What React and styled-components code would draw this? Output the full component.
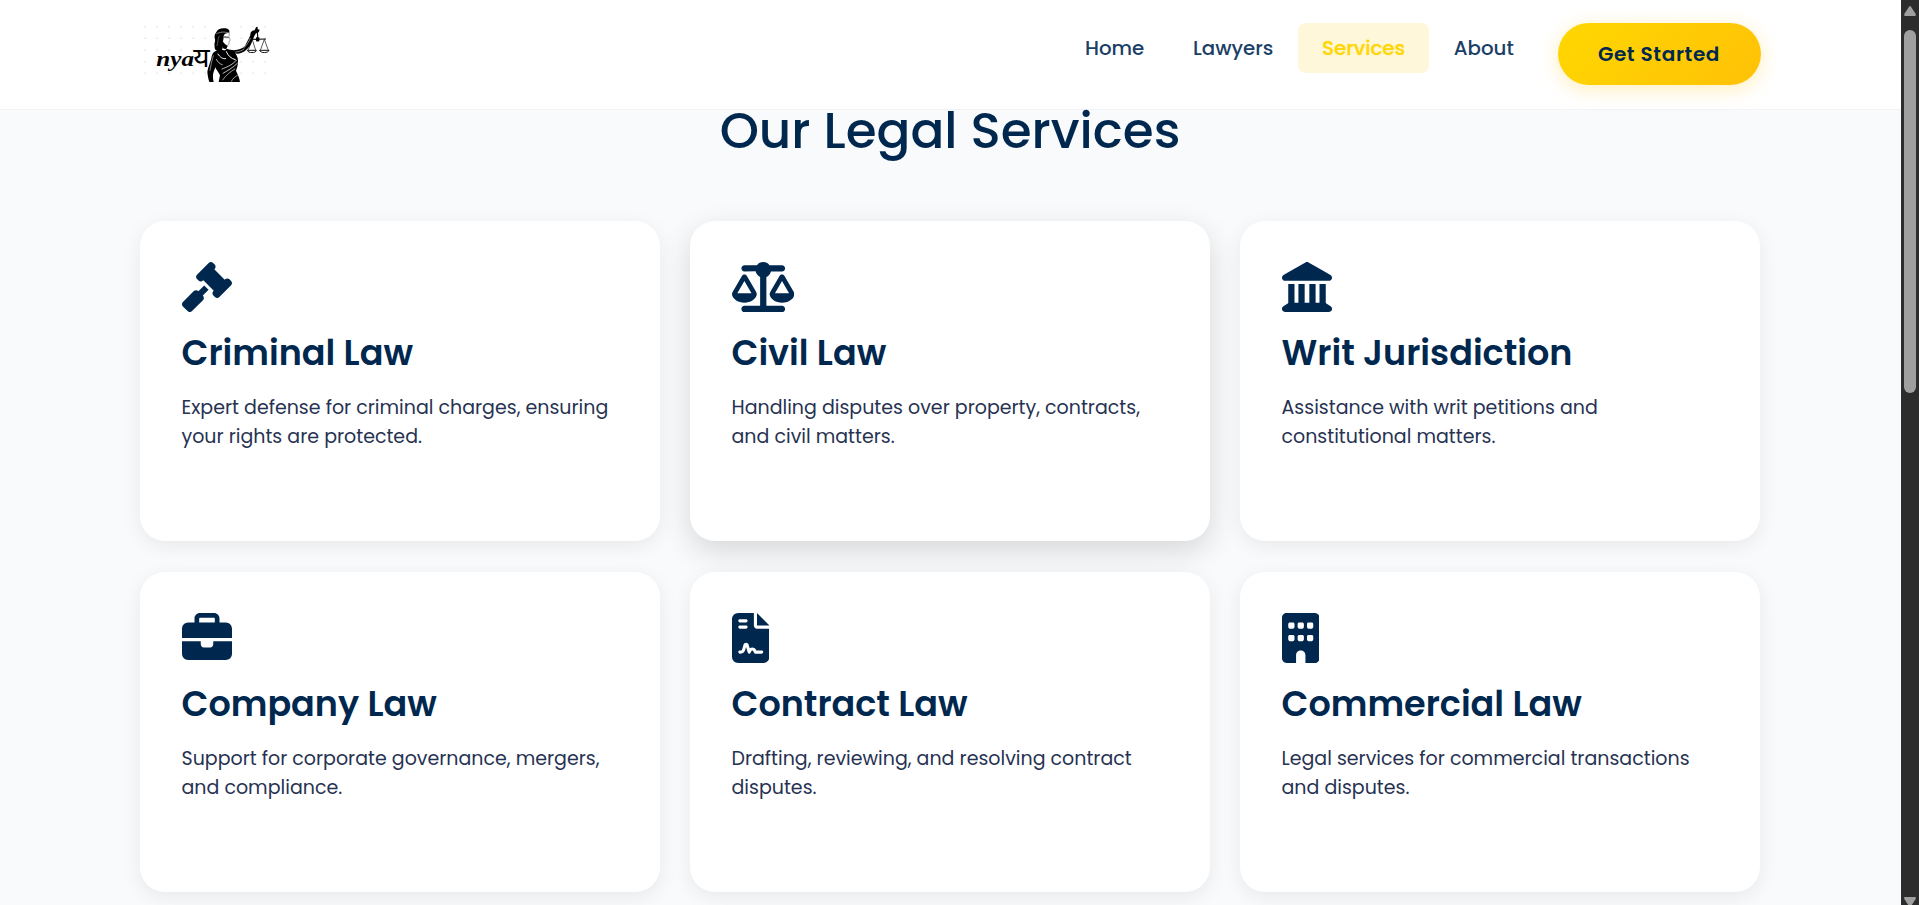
import React from 'react';
import styled, { createGlobalStyle, css } from 'styled-components';
import {
  FaGavel,
  FaScaleBalanced,
  FaLandmark,
  FaBriefcase,
  FaFileContract,
  FaBuilding,
} from 'react-icons/fa6';

const navy = '#00284f';

const GlobalStyle = createGlobalStyle`
  * { box-sizing: border-box; }
  body {
    margin: 0;
    overflow: hidden;
    background: #f8fafc;
    font-family: Poppins, Inter, "Noto Sans", sans-serif;
  }
`;

const Window = styled.div`
  display: grid;
  grid-template-columns: minmax(0, 1fr) 18px;
  height: 905px;
  overflow: hidden;
`;

const Page = styled.div`
  height: 905px;
  overflow: hidden;
  background: #f8fafc;
`;

const Header = styled.header`
  height: 110px;
  background: #fff;
  border-bottom: 1px solid #f1f3f5;
`;

const HeaderInner = styled.div`
  width: 1620px;
  margin: 0 auto;
  padding-top: 23px;
  display: flex;
  justify-content: space-between;
  align-items: flex-start;
`;

const LogoSvg = styled.svg`
  display: block;
  width: 130px;
  height: 62px;
  margin-top: -3px;
`;

const Nav = styled.nav`
  display: flex;
  align-items: flex-start;
  gap: 0.7px;
`;

const NavLink = styled.a`
  height: 50px;
  padding: 0 24px;
  border-radius: 8px;
  font-size: 19.8px;
  font-weight: 500;
  line-height: 50px;
  color: #1b3f66;
  ${({ $active }) =>
    $active &&
    css`
      background: #fff7d9;
      color: #ffd60a;
      text-shadow: 0 0 1px rgba(255, 214, 10, 0.7);
    `}
`;

const StartButton = styled.button`
  width: 203px;
  height: 62px;
  margin-left: 19px;
  padding: 0;
  border: 0;
  border-radius: 31px;
  background: linear-gradient(135deg, #ffd700, #ffc107);
  box-shadow: 0 4px 20px rgba(255, 193, 7, 0.28);
  color: ${navy};
  font-family: inherit;
  font-size: 20px;
  font-weight: 600;
  letter-spacing: 0.6px;
  line-height: 62px;
`;

const Services = styled.main`
  width: 1620px;
  margin: 0 0 0 140px;
`;

const Heading = styled.h2`
  margin: -9px 0 60px;
  font-size: 50px;
  font-weight: 500;
  line-height: 60px;
  text-align: center;
  color: ${navy};
`;

const CardGrid = styled.div`
  display: grid;
  grid-template-columns: repeat(3, 1fr);
  gap: 31px 30px;
`;

const Card = styled.article`
  height: 320px;
  padding: 41px 40px 40px 41.5px;
  border-radius: 25px;
  background: #fff;
  box-shadow: ${({ $raised }) =>
    $raised ? '0 10px 30px rgba(0, 0, 0, 0.14)' : '0 5px 20px rgba(0, 0, 0, 0.07)'};
`;

const CardIcon = styled.svg`
  display: block;
  width: ${({ $width }) => $width}px;
  height: 50px;
  color: ${navy};
`;

const CardTitle = styled.h3`
  margin: 20px 0 19px;
  font-size: 35px;
  font-weight: 600;
  line-height: 42px;
  color: ${navy};
`;

const CardText = styled.p`
  margin: 0;
  font-size: 19px;
  line-height: 29px;
  color: #273252;
`;

const Scrollbar = styled.div`
  display: flex;
  flex-direction: column;
  align-items: center;
  background: #2c2c2c;
  overflow: hidden;

  svg {
    flex: none;
    display: block;
    fill: #9f9f9f;
  }
`;

const Thumb = styled.div`
  width: 12px;
  height: 363px;
  margin: 14px 0 504px;
  flex: none;
  border-radius: 6px;
  background: #9f9f9f;
`;

const services = [
  { icon: FaGavel, width: 50, title: 'Criminal Law', text: 'Expert defense for criminal charges, ensuring your rights are protected.' },
  { icon: FaScaleBalanced, width: 62.5, title: 'Civil Law', text: 'Handling disputes over property, contracts, and civil matters.', raised: true },
  { icon: FaLandmark, width: 50, title: 'Writ Jurisdiction', text: 'Assistance with writ petitions and constitutional matters.' },
  { icon: FaBriefcase, width: 50, title: 'Company Law', text: 'Support for corporate governance, mergers, and compliance.' },
  { icon: FaFileContract, width: 37.5, title: 'Contract Law', text: 'Drafting, reviewing, and resolving contract disputes.' },
  { icon: FaBuilding, width: 37.5, title: 'Commercial Law', text: 'Legal services for commercial transactions and disputes.' },
];

const links = ['Home', 'Lawyers', 'Services', 'About'];

const dotRows = [50, 85, 120, 155, 190];
const dotColumns = [45, 81, 117, 153, 189, 225, 333, 369, 405];

function Logo() {
  return (
    <LogoSvg viewBox="33 30 390 186" role="img" aria-label="nyaय">
      <g fill="#dcdcdc">
        {dotRows.flatMap((y) =>
          dotColumns.map((x) => <circle key={`${x}-${y}`} cx={x} cy={y} r="2.2" />)
        )}
      </g>
      <text
        x="79"
        y="167"
        fontFamily='"Liberation Serif", serif'
        fontSize="62"
        fontStyle="italic"
        fontWeight="700"
        textLength="113"
        lengthAdjust="spacingAndGlyphs"
      >
        nya
      </text>
      <text x="190" y="170" fontFamily='"Noto Sans", sans-serif' fontSize="82" textLength="49" lengthAdjust="spacingAndGlyphs">
        य
      </text>
      {/* hair and headband */}
      <path d="M258 68C262 56 275 53 287 55C295 56 300 61 298 69L290 70C283 71 280 76 281 83C279 91 279 98 276 104C281 111 277 122 270 124C262 126 252 119 254 109C251 101 257 96 255 88C252 80 254 73 258 68Z" />
      <path d="M259 72C270 65 284 65 298 69" fill="none" stroke="#fff" strokeWidth="1.5" />
      {/* face profile and neck */}
      <path d="M298 69L297 80L301 91L297 94L297 103C294 108 288 106 284 104L285 115" fill="none" stroke="#555" strokeWidth="1.6" />
      <path d="M281 78L297 80L297 85L283 84Z" fill="#777" />
      <path d="M278 94C283 101 286 105 293 108L289 117L281 116L273 106Z" />
      {/* torso, left arm and robe */}
      <path d="M262 122C250 123 246 132 244 145C240 160 234 173 232 185C233 197 235 207 238 216L251 216C248 204 248 194 251 185L256 172C260 181 266 188 270 196L266 216L330 216C328 202 323 193 318 182C323 169 326 157 323 144C319 132 313 125 302 120L290 116C286 122 280 121 274 119Z" />
      {/* raised arm and hand */}
      <path d="M300 119C318 123 334 118 345 108C351 96 357 86 361 76C360 67 366 61 374 61L378 52L383 50L383 58L389 59L386 67L378 70C372 78 370 87 365 97C358 113 347 125 333 129C323 133 312 130 302 127Z" />
      {/* folds */}
      <g fill="none" stroke="#fff" strokeLinecap="round">
        <path d="M264 132C270 142 279 148 287 146M289 125C294 137 303 146 316 149" strokeWidth="3" />
        <path d="M259 148C264 157 269 162 277 164" strokeWidth="2" />
        <path d="M319 151C306 166 288 172 276 177M322 160C308 174 292 182 279 190" strokeWidth="2.2" />
        <path d="M315 177C302 184 288 195 278 210M322 196C313 201 308 207 304 214" strokeWidth="1.8" />
        <path d="M250 137C246 151 242 166 240 181" strokeWidth="1.5" />
        <path d="M341 114C350 106 356 96 361 85M317 126C327 126 336 122 342 117" strokeWidth="1.6" />
        <path d="M268 78C261 88 266 96 261 107" strokeWidth="1" />
      </g>
      {/* scales */}
      <path d="M382 65L384 94M365 88L408 87" fill="none" stroke="#111" strokeWidth="3.6" />
      <path d="M378 82h10v12h-10z" />
      <g fill="none" stroke="#111" strokeWidth="2.1">
        <path d="M367 89L354 121M367 89L377 121M403 88L391 121M403 88L415 121" />
        <path d="M352 121H379C378 130 354 130 352 121ZM389 121H417C415 130 391 130 389 121Z" fill="#fff" strokeWidth="3" />
      </g>
    </LogoSvg>
  );
}

export default function App() {
  return (
    <Window>
      <GlobalStyle />
      <Page>
        <Header>
          <HeaderInner>
            <Logo />
            <Nav>
              {links.map((label) => (
                <NavLink key={label} $active={label === 'Services'}>
                  {label}
                </NavLink>
              ))}
              <StartButton>Get Started</StartButton>
            </Nav>
          </HeaderInner>
        </Header>
        <Services>
          <Heading>Our Legal Services</Heading>
          <CardGrid>
            {services.map(({ icon, width, title, text, raised }) => (
              <Card key={title} $raised={raised}>
                <CardIcon as={icon} $width={width} />
                <CardTitle>{title}</CardTitle>
                <CardText>{text}</CardText>
              </Card>
            ))}
          </CardGrid>
        </Services>
      </Page>
      <Scrollbar>
        <svg width="18" height="16" viewBox="0 0 18 16">
          <path d="M9 6Q9.6 6 10 6.8L14.7 14Q15.3 16 14 16H4Q2.7 16 3.3 14L8 6.8Q8.4 6 9 6Z" />
        </svg>
        <Thumb />
        <svg width="18" height="10" viewBox="0 0 18 10">
          <path d="M4 0H14Q15.3 0 14.7 2L10 9.2Q9 10.6 8 9.2L3.3 2Q2.7 0 4 0Z" />
        </svg>
      </Scrollbar>
    </Window>
  );
}
